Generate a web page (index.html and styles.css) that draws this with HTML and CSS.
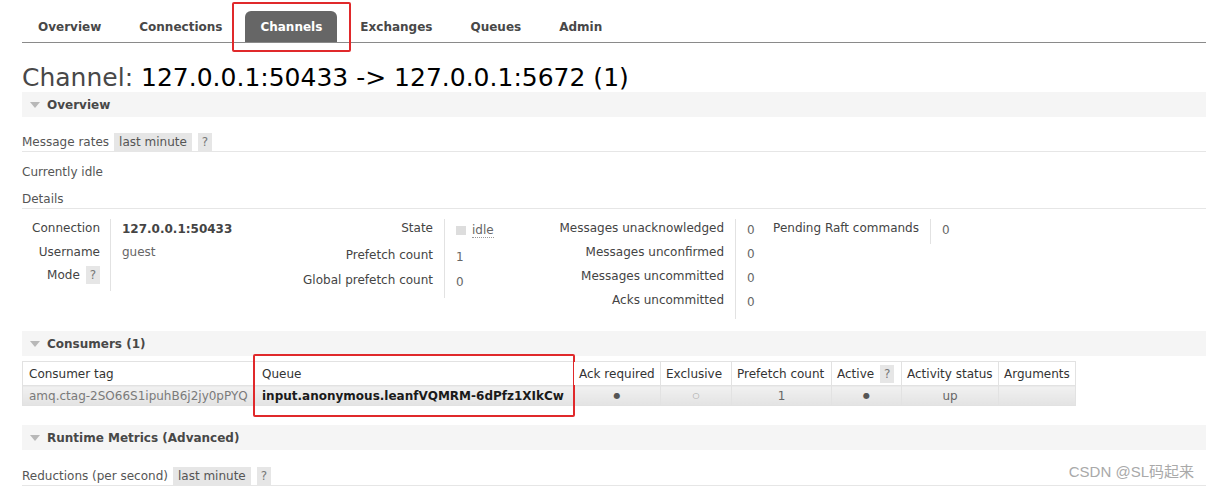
FILE: index.html
```html
<!DOCTYPE html>
<html lang="en">
<head>
<meta charset="utf-8">
<title>Channel</title>
<link rel="stylesheet" href="styles.css">
</head>
<body>
<div class="page">
  <ul class="tabs">
    <li class="tab">Overview</li>
    <li class="tab">Connections</li>
    <li class="tab active">Channels<span class="mark mark-tab"></span></li>
    <li class="tab">Exchanges</li>
    <li class="tab">Queues</li>
    <li class="tab">Admin</li>
  </ul>

  <h1 class="title">Channel: <span class="title-id">127.0.0.1:50433 -&gt; 127.0.0.1:5672 (1)</span></h1>

  <div class="section-head"><span class="tri"></span>Overview</div>

  <div class="rate-row">
    <span class="rate-label">Message rates</span>
    <span class="pill">last minute</span>
    <span class="pill q">?</span>
  </div>

  <p class="idle-text">Currently idle</p>

  <h3 class="sub">Details</h3>

  <div class="facts-row">
    <div class="facts g1">
      <div class="lbl">Connection</div><div class="val strong">127.0.0.1:50433</div>
      <div class="lbl">Username</div><div class="val">guest</div>
      <div class="lbl">Mode <span class="pill q small">?</span></div><div class="val"></div>
    </div>
    <div class="facts g2">
      <div class="lbl">State</div><div class="val"><span class="state-box"></span><span class="state">idle</span></div>
      <div class="lbl">Prefetch count</div><div class="val">1</div>
      <div class="lbl">Global prefetch count</div><div class="val">0</div>
    </div>
    <div class="facts g3">
      <div class="lbl">Messages unacknowledged</div><div class="val">0</div>
      <div class="lbl">Messages unconfirmed</div><div class="val">0</div>
      <div class="lbl">Messages uncommitted</div><div class="val">0</div>
      <div class="lbl">Acks uncommitted</div><div class="val">0</div>
    </div>
    <div class="facts g4">
      <div class="lbl">Pending Raft commands</div><div class="val">0</div>
    </div>
  </div>

  <div class="section-head consumers-head"><span class="tri"></span>Consumers (1)</div>

  <table class="list">
    <colgroup>
      <col class="c-tag"><col class="c-queue"><col class="c-ack"><col class="c-excl"><col class="c-pref"><col class="c-act"><col class="c-stat"><col class="c-args">
    </colgroup>
    <thead>
      <tr>
        <th>Consumer tag</th>
        <th class="marked">Queue<span class="mark mark-col"></span></th>
        <th>Ack required</th>
        <th>Exclusive</th>
        <th>Prefetch count</th>
        <th>Active <span class="pill q small">?</span></th>
        <th>Activity status</th>
        <th>Arguments</th>
      </tr>
    </thead>
    <tbody>
      <tr>
        <td class="tag">amq.ctag-2SO66S1ipuhB6j2jy0pPYQ</td>
        <td class="queue">input.anonymous.leanfVQMRM-6dPfz1XIkCw</td>
        <td class="c">&#9679;</td>
        <td class="c light">&#9675;</td>
        <td class="c">1</td>
        <td class="c">&#9679;</td>
        <td class="c">up</td>
        <td class="c"></td>
      </tr>
    </tbody>
  </table>

  <div class="section-head runtime-head"><span class="tri"></span>Runtime Metrics (Advanced)</div>

  <div class="rate-row reductions">
    <span class="rate-label">Reductions (per second)</span>
    <span class="pill">last minute</span>
    <span class="pill q">?</span>
  </div>

  <div class="watermark">CSDN @SL码起来</div>
</div>
</body>
</html>
```

FILE: styles.css
```css
html, body {
  margin: 0;
  padding: 0;
  background: #ffffff;
}

body {
  font-family: "DejaVu Sans", Verdana, sans-serif;
  font-size: 12px;
  color: #484848;
}

.page {
  position: relative;
  padding: 11px 9px 0 22px;
  height: 480px;
  overflow: hidden;
}

/* tabs */
.tabs {
  list-style: none;
  margin: 0;
  padding: 0 0 0 1px;
  display: flex;
  gap: 8px;
  border-bottom: 1px solid #8a8a8a;
  height: 31px;
}

.tab {
  position: relative;
  padding: 1px 15px 0 15px;
  height: 30px;
  line-height: 31px;
  font-weight: bold;
  color: #484848;
  border-radius: 6px 6px 0 0;
}

.tab.active {
  background: #666666;
  color: #ffffff;
}

.mark {
  position: absolute;
  border: 2px solid #e0292b;
  border-radius: 2px;
  pointer-events: none;
}

.mark-tab {
  top: -9px;
  bottom: -10px;
  left: -13px;
  right: -14px;
}

/* title */
.title {
  margin: 20px 0 0 0;
  font-size: 25px;
  line-height: 29px;
  font-weight: normal;
  color: #484848;
}

.title-id {
  color: #000000;
}

/* section headers */
.section-head {
  display: flex;
  align-items: center;
  height: 25px;
  background: #f5f5f5;
  font-weight: bold;
  color: #484848;
  padding-left: 8px;
}

.tri {
  width: 0;
  height: 0;
  border-left: 5px solid transparent;
  border-right: 5px solid transparent;
  border-top: 6px solid #b8b8b8;
  margin-right: 7px;
}

/* rate rows */
.rate-row {
  display: flex;
  align-items: center;
  margin-top: 16px;
  height: 18px;
  border-bottom: 1px solid #e6e6e6;
  color: #555555;
}

.rate-label {
  margin-right: 5px;
}

.pill {
  display: inline-block;
  background: #e6e6e6;
  color: #555555;
  padding: 0 5px;
  height: 18px;
  line-height: 18px;
  margin-right: 6px;
}

.pill.q {
  color: #777777;
  padding: 0 4px;
}

.pill.small {
  margin-right: 0;
  margin-left: 2px;
}

.idle-text {
  margin: 11px 0 0 0;
  line-height: 18px;
  color: #555555;
}

.sub {
  margin: 9px 0 0 0;
  font-size: 12px;
  font-weight: normal;
  line-height: 18px;
  color: #555555;
  border-bottom: 1px solid #e6e6e6;
}

/* details */
.facts-row {
  display: flex;
  align-items: flex-start;
  margin-top: 10px;
  height: 100px;
}

.facts {
  display: grid;
  grid-auto-rows: 24px;
}

.facts .lbl {
  text-align: right;
  padding: 2px 11px 0 0;
  line-height: 15px;
  color: #444444;
  white-space: nowrap;
}

.facts .val {
  border-left: 1px solid #e2e2e2;
  padding: 2px 0 0 11px;
  line-height: 15px;
  color: #666666;
  white-space: nowrap;
}

.facts .val.strong {
  font-weight: bold;
  color: #444444;
  padding-top: 3px;
}

.g1 {
  grid-template-columns: 88px 180px;
}

.g1 .lbl {
  padding-right: 10px;
}

.g1 .lbl:nth-child(5) {
  padding-top: 0;
  line-height: 18px;
  margin-top: -1px;
}

.g2 {
  grid-template-columns: 154px 106px;
  grid-template-rows: 27px 25px 27px;
}

.g2 .val {
  padding-top: 4px;
}

.g3 {
  grid-template-columns: 185px 25px;
  grid-auto-rows: 24px;
  padding-bottom: 4px;
}

.g3 .val {
  padding-top: 4px;
}

.g3 .val:last-child {
  height: 24px;
}

.g4 {
  grid-template-columns: 170px 40px;
  grid-auto-rows: 25px;
}

.g4 .val {
  padding-top: 4px;
}

.state-box {
  display: inline-block;
  width: 10px;
  height: 9px;
  background: #dddddd;
  margin-right: 6px;
  vertical-align: -1px;
}

.state {
  border-bottom: 1px dotted #999999;
  color: #666666;
}

.consumers-head {
  margin-top: 12px;
}

/* consumers table */
.list {
  margin-top: 5px;
  border-collapse: collapse;
  table-layout: fixed;
  width: 1053px;
}

.c-tag { width: 231px; }
.c-queue { width: 320px; }
.c-ack { width: 87px; }
.c-excl { width: 71px; }
.c-pref { width: 100px; }
.c-act { width: 70px; }
.c-stat { width: 97px; }
.c-args { width: 77px; }

.list th {
  position: relative;
  height: 23px;
  padding: 0 5px;
  text-align: left;
  font-weight: normal;
  color: #333333;
  background: #ffffff;
  border: 1px solid #e2e2e2;
  white-space: nowrap;
}

.list th:first-child {
  padding-left: 6px;
}

.list th.marked {
  padding-left: 8px;
}

.mark-col {
  top: -8px;
  left: -1px;
  right: -2px;
  height: 59px;
}

.list td {
  height: 19px;
  padding: 0 5px;
  background: linear-gradient(#f1f1f1, #e3e3e3);
  border: 1px solid #e2e2e2;
  border-top-color: #d8d8d8;
  color: #666666;
  white-space: nowrap;
}

.list td.tag {
  color: #7a7a7a;
  padding-left: 6px;
  overflow: hidden;
}

.list td.queue {
  font-weight: bold;
  color: #1a1a1a;
  padding-left: 8px;
}

.list td.c {
  text-align: center;
  font-size: 8px;
  color: #555555;
}

.list td.c:nth-child(5),
.list td.c:nth-child(7) {
  font-size: 12px;
  color: #666666;
}

.list td.light {
  color: #999999;
}

.runtime-head {
  margin-top: 19px;
}

.reductions {
  margin-top: 17px;
}

/* watermark */
.watermark {
  position: absolute;
  right: 21px;
  top: 460px;
  font-family: "Liberation Sans", "Noto Sans CJK SC", sans-serif;
  font-size: 15px;
  color: #a9a9a9;
}
```
